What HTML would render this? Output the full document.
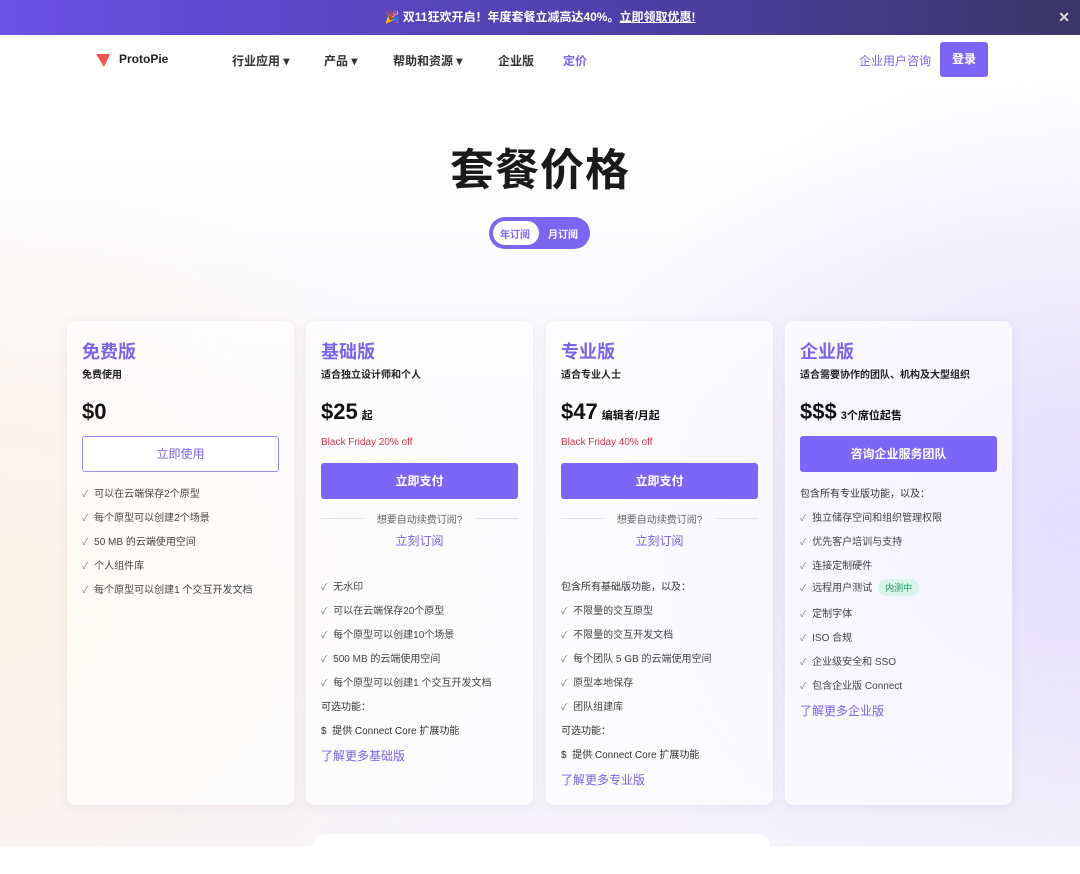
<!DOCTYPE html>
<html><head><meta charset="utf-8"><style>
*{margin:0;padding:0;box-sizing:border-box}
body{width:1080px;height:846px;overflow:hidden;position:relative;font-family:"Liberation Sans","Noto Sans CJK SC",sans-serif;color:#222;
background:radial-gradient(ellipse 500px 420px at 0px 600px,#fdf3e6 0%,rgba(253,243,230,0) 100%),radial-gradient(ellipse 520px 460px at 1080px 520px,#e4defc 0%,rgba(228,222,252,0) 100%),linear-gradient(#fff 0,#fff 150px,#f8f6fb 400px,#f6f4fa 100%);}
.ban{position:absolute;top:0;left:0;width:1080px;height:35px;background:linear-gradient(90deg,#6a50e6,#4d3fa6 60%,#3b3566);color:#fff;font-size:12px;font-weight:bold;text-align:center;line-height:35px}
.ban u{text-decoration:underline}
.x{position:absolute;right:10px;top:0;font-size:14px;color:#ddd}
.nav{position:absolute;top:35px;left:0;width:1080px;height:50px;background:#fff}
.nav span{position:absolute;top:17px;font-size:12px;font-weight:bold;color:#333}
.a{position:absolute;white-space:nowrap}
h1{position:absolute;top:134px;left:0;width:1080px;text-align:center;font-size:44px;font-weight:bold;color:#1a1a1a;letter-spacing:1px}
.tog{position:absolute;left:489px;top:217px;width:101px;height:32px;border-radius:16px;background:#7b66f2}
.tog i{position:absolute;left:4px;top:4px;width:46px;height:24px;border-radius:12px;background:#fff}
.tog b{position:absolute;top:9px;font-size:10px;font-weight:bold}
.card{position:absolute;top:321px;width:227px;height:484px;background:rgba(255,255,255,.62);border-radius:8px;box-shadow:0 2px 10px rgba(120,110,160,.12)}
.t{left:15px;top:17px;font-size:18px;font-weight:bold;color:#7b63ea}
.s{left:15px;top:45px;font-size:10px;font-weight:bold;color:#222}
.p{left:15px;top:78px;font-size:22px;font-weight:bold;color:#111}
.p small{font-size:11px;margin-left:4px}
.bf{left:15px;top:116px;font-size:10px;color:#d9334b}
.btn{position:absolute;left:15px;width:197px;height:36px;border-radius:3px;background:#7b66f7;color:#fff;font-size:12px;font-weight:bold;text-align:center;line-height:36px}
.btn.o{background:#fff;border:1px solid #9c8cf0;color:#7b63ea;font-weight:normal;line-height:34px}
.dv{left:15px;width:197px;top:190px;height:14px;font-size:10px;color:#666;text-align:center}
.dv:before,.dv:after{content:"";position:absolute;top:7px;width:42px;border-top:1px solid #e3e1ea}
.dv:before{left:0}.dv:after{right:0}
.sub{left:0;width:227px;text-align:center;top:211px;font-size:12px;color:#7b63ea}
.l{left:15px;font-size:10px;color:#444}
.l:before{content:"\2713";color:#777;margin-right:6px;font-size:9px}
.h{left:15px;font-size:10px;color:#333}
.lk{left:15px;font-size:12px;color:#7b63ea}
.tag{display:inline-block;background:#d8f5ea;color:#1d9a6c;font-size:9px;border-radius:9px;padding:2px 7px;margin-left:6px}
</style></head><body>
<div class="ban">🎉 双11狂欢开启！年度套餐立减高达40%。<u>立即领取优惠!</u><span class="x">✕</span></div>
<div class="nav">
<svg style="position:absolute;left:95px;top:17px" width="16" height="16" viewBox="0 0 16 16"><path d="M1 2 H15 L9 15 Z" fill="#f0544f"/></svg>
<span style="left:119px;color:#222">ProtoPie</span>
<span style="left:232px">行业应用 ▾</span>
<span style="left:324px">产品 ▾</span>
<span style="left:393px">帮助和资源 ▾</span>
<span style="left:498px">企业版</span>
<span style="left:563px;color:#7b66f2">定价</span>
<span style="left:859px;color:#7b66f2;font-weight:normal">企业用户咨询</span>
<div style="position:absolute;left:940px;top:7px;width:48px;height:35px;background:#7b66f7;border-radius:3px;color:#fff;font-size:12px;font-weight:bold;text-align:center;line-height:35px">登录</div>
</div>
<h1>套餐价格</h1>
<div class="tog"><i></i><b style="left:11px;color:#7b66f2">年订阅</b><b style="left:59px;color:#fff">月订阅</b></div>

<div class="card" style="left:67px">
<div class="a t">免费版</div><div class="a s">免费使用</div><div class="a p">$0</div>
<div class="btn o" style="top:115px">立即使用</div>
<div class="a l" style="top:164px">可以在云端保存2个原型</div>
<div class="a l" style="top:188px">每个原型可以创建2个场景</div>
<div class="a l" style="top:212px">50 MB 的云端使用空间</div>
<div class="a l" style="top:236px">个人组件库</div>
<div class="a l" style="top:260px">每个原型可以创建1 个交互开发文档</div>
</div>

<div class="card" style="left:306px">
<div class="a t">基础版</div><div class="a s">适合独立设计师和个人</div><div class="a p">$25<small>起</small></div>
<div class="a bf">Black Friday 20% off</div>
<div class="btn" style="top:142px">立即支付</div>
<div class="a dv">想要自动续费订阅?</div><div class="a sub">立刻订阅</div>
<div class="a l" style="top:257px">无水印</div>
<div class="a l" style="top:281px">可以在云端保存20个原型</div>
<div class="a l" style="top:305px">每个原型可以创建10个场景</div>
<div class="a l" style="top:329px">500 MB 的云端使用空间</div>
<div class="a l" style="top:353px">每个原型可以创建1 个交互开发文档</div>
<div class="a h" style="top:377px">可选功能：</div>
<div class="a h" style="top:401px">$&nbsp; 提供 Connect Core 扩展功能</div>
<div class="a lk" style="top:426px">了解更多基础版</div>
</div>

<div class="card" style="left:546px">
<div class="a t">专业版</div><div class="a s">适合专业人士</div><div class="a p">$47<small>编辑者/月起</small></div>
<div class="a bf">Black Friday 40% off</div>
<div class="btn" style="top:142px">立即支付</div>
<div class="a dv">想要自动续费订阅?</div><div class="a sub">立刻订阅</div>
<div class="a h" style="top:257px">包含所有基础版功能，以及：</div>
<div class="a l" style="top:281px">不限量的交互原型</div>
<div class="a l" style="top:305px">不限量的交互开发文档</div>
<div class="a l" style="top:329px">每个团队 5 GB 的云端使用空间</div>
<div class="a l" style="top:353px">原型本地保存</div>
<div class="a l" style="top:377px">团队组建库</div>
<div class="a h" style="top:401px">可选功能：</div>
<div class="a h" style="top:425px">$&nbsp; 提供 Connect Core 扩展功能</div>
<div class="a lk" style="top:450px">了解更多专业版</div>
</div>

<div class="card" style="left:785px">
<div class="a t">企业版</div><div class="a s">适合需要协作的团队、机构及大型组织</div><div class="a p">$$$<small>3个席位起售</small></div>
<div class="btn" style="top:115px">咨询企业服务团队</div>
<div class="a h" style="top:164px">包含所有专业版功能，以及：</div>
<div class="a l" style="top:188px">独立储存空间和组织管理权限</div>
<div class="a l" style="top:212px">优先客户培训与支持</div>
<div class="a l" style="top:236px">连接定制硬件</div>
<div class="a l" style="top:258px">远程用户测试<span class="tag">内测中</span></div>
<div class="a l" style="top:284px">定制字体</div>
<div class="a l" style="top:308px">ISO 合规</div>
<div class="a l" style="top:332px">企业级安全和 SSO</div>
<div class="a l" style="top:356px">包含企业版 Connect</div>
<div class="a lk" style="top:381px">了解更多企业版</div>
</div>

<div style="position:absolute;left:313px;top:834px;width:457px;height:40px;background:#fff;border-radius:12px"></div>
</body></html>
